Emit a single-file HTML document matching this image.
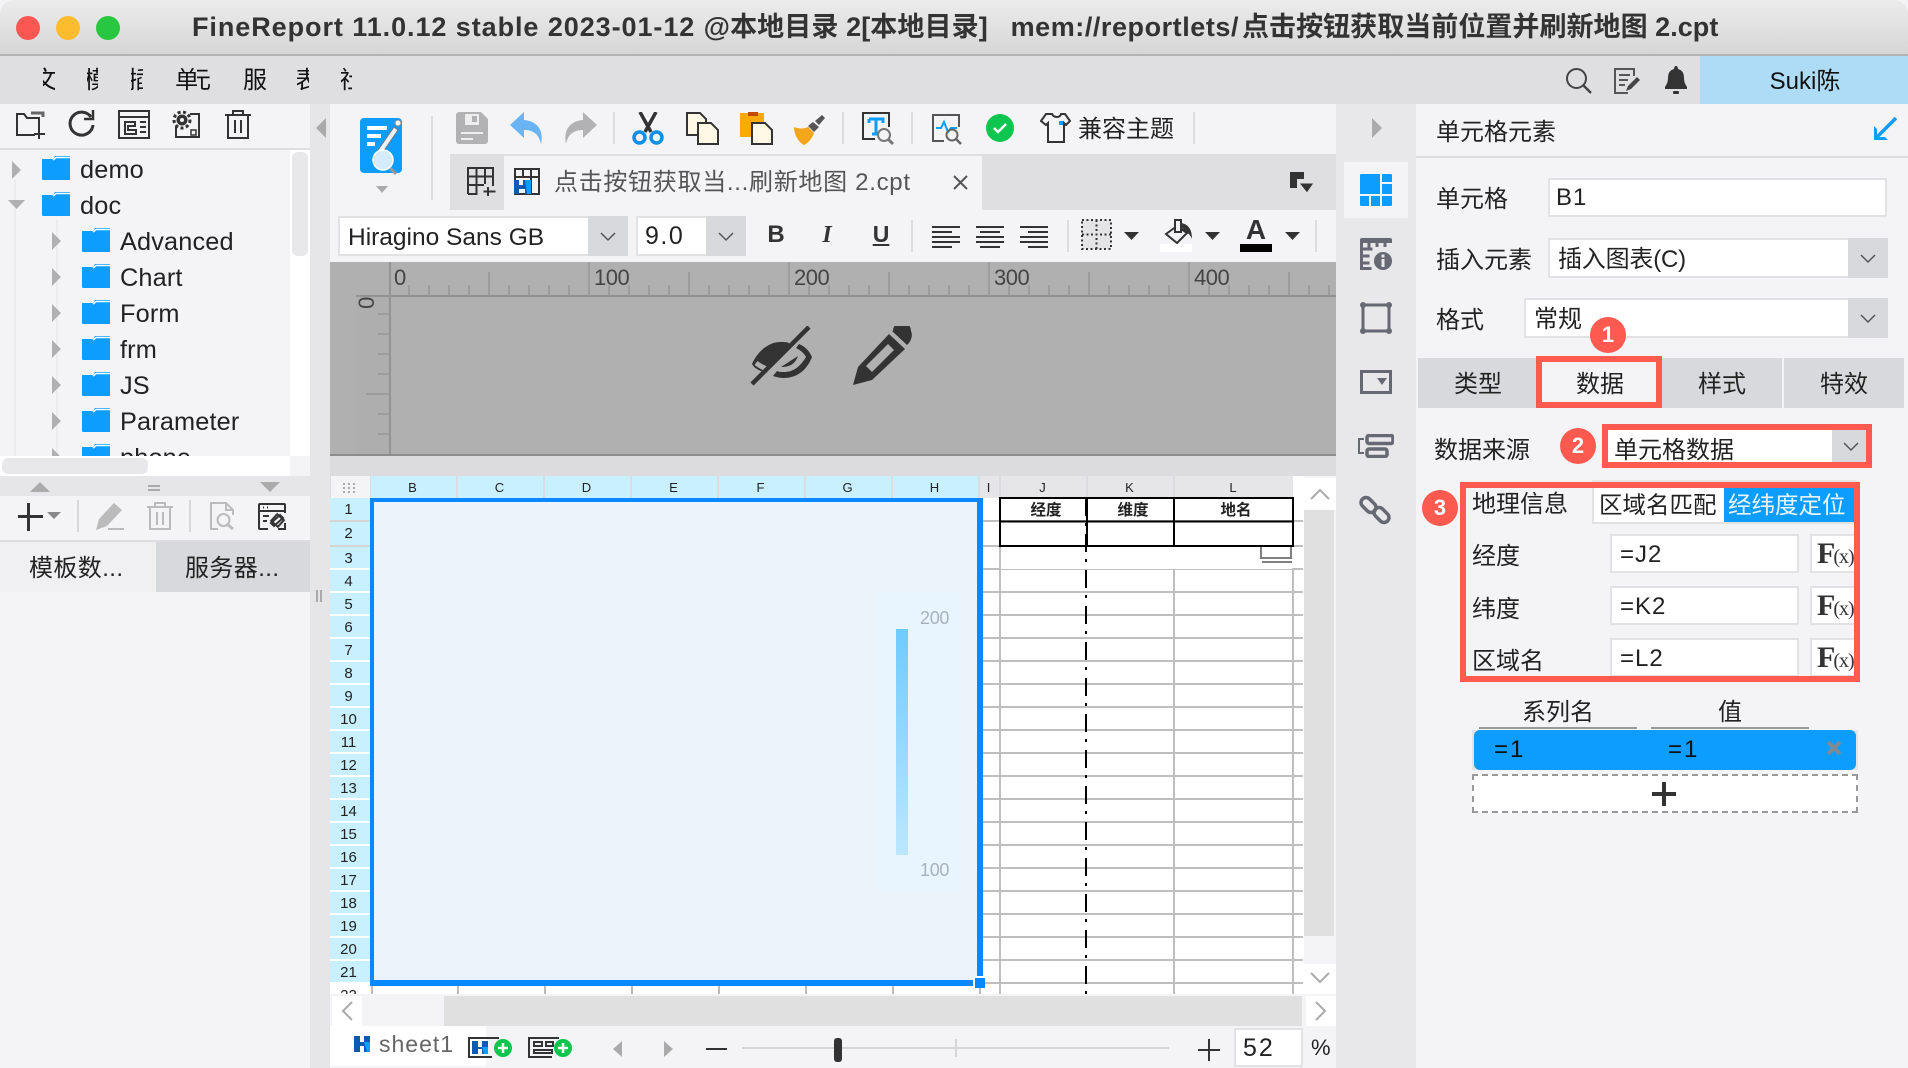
<!DOCTYPE html>
<html><head><meta charset="utf-8"><title>FineReport</title>
<style>
html,body{margin:0;padding:0;background:#fff}
#p{position:relative;width:1908px;height:1068px;overflow:hidden;background:#f4f4f6;font-family:"Liberation Sans","Noto Sans CJK SC",sans-serif;color:#222}
#p div,#p svg,#p span.a{position:absolute}
.t{white-space:nowrap;font-size:24px;line-height:30px;height:30px}
.tr{letter-spacing:.15px;font-size:25.3px !important}
.b{background:#fff;border:2px solid #e2e2e4;box-sizing:border-box}
.ar{background:#d8d9dc}
.r{border:6px solid #ff5a4f;box-sizing:border-box}
.bd{width:36px;height:36px;border-radius:50%;background:#ff5a4f;color:#fff;font-weight:bold;font-size:22px;line-height:36px;text-align:center}
.f{width:28px;height:24px}
.ch{background:#c9f0ff;height:22px;top:476px;font-size:13px;line-height:24px;text-align:center;overflow:hidden;text-indent:-2px}
.cg{background:#e6e6e8;height:22px;top:476px;font-size:13px;line-height:24px;text-align:center;overflow:hidden;text-indent:-2px}
.rh{left:330px;width:40px;height:21px;background:#c9f0ff;font-size:15px;line-height:23px;text-align:center;text-indent:-3px}
.rl{font-size:22px;line-height:26px;height:26px;color:#444;top:265px;letter-spacing:-.5px}
.m{font-size:24px;line-height:30px;height:30px;top:66px;overflow:hidden;color:#111;white-space:nowrap}
.fx{font-family:'Liberation Serif',serif;font-weight:bold;font-size:30px;color:#333;letter-spacing:-2px}
.fx span{font-size:20px;font-weight:normal;letter-spacing:-1px}
</style></head><body><div id="p">

<!-- title bar -->
<div style="left:0;top:0;width:1908px;height:54px;background:linear-gradient(#ececec,#d6d6d6);border-radius:14px 14px 0 0"></div>
<div style="left:0;top:54px;width:1908px;height:2px;background:#b4b4b4"></div>
<div style="left:16px;top:16px;width:24px;height:24px;border-radius:50%;background:#fc5753"></div>
<div style="left:56px;top:16px;width:24px;height:24px;border-radius:50%;background:#fdbc2e"></div>
<div style="left:96px;top:16px;width:24px;height:24px;border-radius:50%;background:#27c83f"></div>
<div class="t" style="left:192px;top:12px;font-size:27px;font-weight:bold;color:#333;letter-spacing:.93px">FineReport 11.0.12 stable 2023-01-12 <span style="letter-spacing:.1px">@本地目录 2[本地目录]&nbsp;&nbsp;&nbsp;</span><span style="letter-spacing:.55px">mem://reportlets/</span><span style="letter-spacing:.04px;margin-left:3px">点击按钮获取当前位置并刷新地图 2.cpt</span></div>

<!-- menu bar -->
<div style="left:0;top:56px;width:1908px;height:48px;background:#dfdfe1"></div>
<div class="m" style="left:43px;width:12px"><span style="margin-left:-10px">文</span></div>
<div class="m" style="left:87px;width:11px"><span style="margin-left:-3px">模</span></div>
<div class="m" style="left:131px;width:12px"><span style="margin-left:-3px">插</span></div>
<div class="m" style="left:175px;width:22px">单</div>
<div class="m" style="left:197px;width:14px"><span style="margin-left:-10px">元</span></div>
<div class="m" style="left:243px;width:24px">服</div>
<div class="m" style="left:297px;width:12px"><span style="margin-left:-2px">表</span></div>
<div class="m" style="left:341px;width:11px"><span style="margin-left:-2px">社</span></div>
<svg style="left:1564px;top:66px" width="30" height="30" viewBox="0 0 30 30" fill="none" stroke="#444" stroke-width="2"><circle cx="12.500" cy="12.500" r="9.500"/><path d="M19.500 19.500L27 27" stroke-width="2.500"/></svg>
<svg style="left:1612px;top:66px" width="30" height="30" viewBox="0 0 30 30" fill="none" stroke="#555" stroke-width="2"><path d="M22 10V3H3v24h13M7 9h11M7 14h9M7 19h6"/><path d="M14 25l2-5 9-9 3 3-9 9z" fill="#444" stroke="none"/></svg>
<svg style="left:1664px;top:64px" width="24" height="32" viewBox="0 0 24 32" fill="#333"><path d="M12 2c-1 0-2 1-2 3C6 6 4 9 4 14c0 5-2 7-3 9v2h22v-2c-1-2-3-4-3-9 0-5-2-8-6-9 0-2-1-3-2-3z"/><rect x="9" y="27" width="6" height="3" rx="1"/></svg>
<div style="left:1700px;top:56px;width:208px;height:48px;background:#aedcf6"></div>
<div class="t" style="left:1700px;top:67px;width:210px;text-align:center;color:#111">Suki陈</div>

<!-- left panel -->
<div style="left:0;top:148px;width:310px;height:2px;background:#dedee0"></div>
<svg style="left:15px;top:110px" width="32" height="30" viewBox="0 0 32 30" fill="none" stroke="#333" stroke-width="2"><path d="M24 21V8H12L9 4H2v21h18"/><path d="M16 3h12v4" stroke-width="3" stroke="#666"/><path d="M24 18v11M19 24h11"/></svg>
<svg style="left:68px;top:109px" width="28" height="30" viewBox="0 0 28 30" fill="none" stroke="#333" stroke-width="3"><path d="M23 8A11.500 11.500 0 1 0 25 16"/><path d="M25 1v9h-9" stroke-width="2.500"/></svg>
<svg style="left:118px;top:110px" width="32" height="29" viewBox="0 0 32 29" fill="none" stroke="#333" stroke-width="2"><rect x="1" y="1" width="30" height="27"/><path d="M1 7h30M7 12h10v4H10v4h8v4H7z"/><path d="M22 12h6M22 17h6M22 22h6"/></svg>
<svg style="left:171px;top:110px" width="32" height="30" viewBox="0 0 32 30" fill="none" stroke="#333" stroke-width="2"><path d="M5 16v11h23V4h-9"/><circle cx="11" cy="10" r="5.500" fill="#333" stroke="none"/><circle cx="11" cy="10" r="8" stroke-width="3" stroke-dasharray="3 2.500"/><circle cx="11" cy="10" r="2" fill="#f4f4f6" stroke="none"/><rect x="20" y="20" width="5" height="5" stroke-width="1.500"/></svg>
<svg style="left:224px;top:110px" width="28" height="29" viewBox="0 0 28 29" fill="none" stroke="#333" stroke-width="2"><path d="M1 5h26M9 5V1h10v4M4 5v23h20V5M11 10v13M17 10v13"/></svg>

<!-- tree -->
<div style="left:290px;top:150px;width:20px;height:306px;background:#fff"></div>
<div style="left:292px;top:152px;width:16px;height:104px;background:#e8e8ea;border-radius:6px"></div>
<div style="left:14px;top:180px;width:2px;height:276px;background:#ececee"></div>
<div style="left:56px;top:220px;width:2px;height:236px;background:#ececee"></div>

<svg width="0" height="0" style="position:absolute"><defs><g id="fd"><path d="M0 3h11l2-3h15v24H1a1 1 0 0 1-1-1z" fill="#0d9dff"/><path d="M11 4L14 1.500h14" stroke="#fff" stroke-width="1.500" fill="none"/></g><path id="ta" d="M0 0l9 9-9 9z" fill="#b0b0b2"/></defs></svg>

<svg style="left:12px;top:161px" width="10" height="18"><use href="#ta"/></svg>
<svg style="left:8px;top:200px" width="18" height="10"><path d="M0 0h17l-8.500 9z" fill="#b0b0b2"/></svg>
<svg class="f" style="left:42px;top:156px"><use href="#fd"/></svg>
<svg class="f" style="left:42px;top:192px"><use href="#fd"/></svg>
<div class="t tr" style="left:80px;top:155px">demo</div>
<div class="t tr" style="left:80px;top:191px">doc</div>

<svg style="left:52px;top:232px" width="10" height="18"><use href="#ta"/></svg>
<svg style="left:52px;top:268px" width="10" height="18"><use href="#ta"/></svg>
<svg style="left:52px;top:304px" width="10" height="18"><use href="#ta"/></svg>
<svg style="left:52px;top:340px" width="10" height="18"><use href="#ta"/></svg>
<svg style="left:52px;top:376px" width="10" height="18"><use href="#ta"/></svg>
<svg style="left:52px;top:412px" width="10" height="18"><use href="#ta"/></svg>
<svg class="f" style="left:82px;top:228px"><use href="#fd"/></svg>
<svg class="f" style="left:82px;top:264px"><use href="#fd"/></svg>
<svg class="f" style="left:82px;top:300px"><use href="#fd"/></svg>
<svg class="f" style="left:82px;top:336px"><use href="#fd"/></svg>
<svg class="f" style="left:82px;top:372px"><use href="#fd"/></svg>
<svg class="f" style="left:82px;top:408px"><use href="#fd"/></svg>
<svg class="f" style="left:82px;top:444px"><use href="#fd"/></svg>
<div class="t tr" style="left:120px;top:227px">Advanced</div>
<div class="t tr" style="left:120px;top:263px">Chart</div>
<div class="t tr" style="left:120px;top:299px">Form</div>
<div class="t tr" style="left:120px;top:335px">frm</div>
<div class="t tr" style="left:120px;top:371px">JS</div>
<div class="t tr" style="left:120px;top:407px">Parameter</div>
<div class="t tr" style="left:120px;top:443px">phone</div>
<svg style="left:52px;top:448px" width="10" height="18"><use href="#ta"/></svg>

<div style="left:0;top:456px;width:290px;height:20px;background:#fff"></div>
<div style="left:290px;top:456px;width:20px;height:20px;background:#f4f4f6"></div>
<div style="left:2px;top:458px;width:146px;height:16px;background:#e8e8ea;border-radius:6px"></div>

<div style="left:0;top:476px;width:310px;height:20px;background:#e6e6e8"></div>
<svg style="left:30px;top:482px" width="20" height="10"><path d="M10 0l10 10H0z" fill="#aaa"/></svg>
<div style="left:148px;top:485px;width:12px;height:2px;background:#aaa"></div>
<div style="left:148px;top:489px;width:12px;height:2px;background:#aaa"></div>
<svg style="left:260px;top:482px" width="20" height="10"><path d="M0 0h20L10 10z" fill="#aaa"/></svg>

<svg style="left:16px;top:498px" width="48" height="38" viewBox="0 0 48 38" fill="#333"><path d="M11 5h3v28h-3z"/><path d="M2 17h25v3H2z"/><path d="M31 14h14l-7 7z" fill="#888"/></svg>
<div style="left:77px;top:500px;width:2px;height:32px;background:#d8d8da"></div>
<svg style="left:95px;top:501px" width="30" height="30" viewBox="0 0 30 30" fill="#bbb"><path d="M1 29l3-11L19 2l8 7-15 16z"/><rect x="13" y="27" width="16" height="2"/></svg>
<svg style="left:146px;top:502px" width="28" height="28" viewBox="0 0 28 28" fill="none" stroke="#bbb" stroke-width="2"><path d="M1 5h26M9 5V1h10v4M4 5v22h20V5M11 10v13M17 10v13"/></svg>
<div style="left:189px;top:500px;width:2px;height:32px;background:#d8d8da"></div>
<svg style="left:209px;top:502px" width="28" height="28" viewBox="0 0 28 28" fill="none" stroke="#bbb" stroke-width="2"><path d="M9 27H2V1h15l7 7v5M17 1v7h7"/><circle cx="14.500" cy="18" r="6"/><path d="M19 23l5 4" stroke-width="3"/></svg>
<svg style="left:258px;top:503px" width="28" height="27" viewBox="0 0 28 27" fill="none" stroke="#333" stroke-width="2"><path d="M10 26H2a1 1 0 0 1-1-1V2a1 1 0 0 1 1-1h24a1 1 0 0 1 1 1v8M1 8h26M5 4.500h1M9 4.500h1M5 13h6M5 18h4M20 26h7v-6"/><path d="M13 20l9-8 3 3-9 8z" fill="#f4f4f6"/><rect x="15" y="13" width="9" height="9" transform="rotate(42 19.500 17.500)"/></svg>

<div style="left:0;top:540px;width:310px;height:2px;background:#dedee0"></div>
<div style="left:0;top:542px;width:156px;height:50px;background:#f0f0f2"></div>
<div style="left:156px;top:542px;width:154px;height:50px;background:#d8d9dc"></div>
<div class="t" style="left:29px;top:554px;letter-spacing:.4px">模板数...</div>
<div class="t" style="left:185px;top:554px;letter-spacing:.4px">服务器...</div>

<!-- splitter -->
<div style="left:310px;top:104px;width:20px;height:964px;background:#e6e6e8"></div>
<svg style="left:316px;top:118px" width="10" height="20"><path d="M10 0v20L0 10z" fill="#aaa"/></svg>
<div style="left:316px;top:590px;width:2px;height:12px;background:#aaa"></div>
<div style="left:320px;top:590px;width:2px;height:12px;background:#aaa"></div>

<!-- center top -->
<div style="left:330px;top:104px;width:1006px;height:158px;background:#f4f4f6"></div>
<svg style="left:358px;top:116px" width="46" height="60" viewBox="0 0 46 60"><rect x="2" y="2" width="42" height="55" rx="4" fill="#0d9dff"/><path d="M9 12h20M9 20h14M9 28h8" stroke="#fff" stroke-width="4"/><path d="M20 34L36 11l4 3-15 22z" fill="#e9f3fb" stroke="#777" stroke-width="1"/><circle cx="40" cy="7" r="3" fill="#fff" stroke="#888"/><circle cx="25" cy="44" r="10" fill="#d5ecff" stroke="#fff" stroke-width="1.500"/><path d="M32 52l6 6" stroke="#999" stroke-width="3"/></svg>
<svg style="left:376px;top:186px" width="12" height="8"><path d="M0 0h12L6 7z" fill="#aaa"/></svg>
<div style="left:431px;top:116px;width:2px;height:84px;background:#dcdcde"></div>

<svg style="left:456px;top:112px" width="32" height="32" viewBox="0 0 32 32"><path d="M3 0h22l7 7v22a3 3 0 0 1-3 3H3a3 3 0 0 1-3-3V3a3 3 0 0 1 3-3z" fill="#b2b2b4"/><rect x="9" y="2" width="14" height="11" fill="#eee"/><rect x="16" y="4" width="5" height="6" fill="#b2b2b4"/><path d="M5 21h22M5 27h12" stroke="#eee" stroke-width="2"/></svg>
<svg style="left:510px;top:112px" width="33" height="32" viewBox="0 0 33 32"><path d="M14 0L0 13l14 13v-8c9 0 15 4 17 14 3-14-4-23-17-24z" fill="#6ab4f5"/></svg>
<svg style="left:564px;top:112px" width="33" height="32" viewBox="0 0 33 32"><path d="M19 0l14 13-14 13v-8c-9 0-15 4-17 14-3-14 4-23 17-24z" fill="#b2b2b4"/></svg>
<div style="left:613px;top:112px;width:2px;height:32px;background:#dcdcde"></div>
<svg style="left:632px;top:112px" width="32" height="33" viewBox="0 0 32 33"><path d="M8 0l11 20M24 0L13 20" stroke="#333" stroke-width="3.500" fill="none"/><circle cx="7.500" cy="25.500" r="5.500" fill="none" stroke="#0d8fe8" stroke-width="3.500"/><circle cx="24.500" cy="25.500" r="5.500" fill="none" stroke="#0d8fe8" stroke-width="3.500"/></svg>
<svg style="left:686px;top:112px" width="33" height="33" viewBox="0 0 33 33" fill="#fff8e6" stroke="#333" stroke-width="2"><path d="M1 1h13l6 6v16H1z"/><path d="M12 11h13l7 7v14H12z"/></svg>
<svg style="left:740px;top:112px" width="33" height="33" viewBox="0 0 33 33"><path d="M0 1h24v24H0z" fill="#fcaa00"/><rect x="8" y="0" width="10" height="4" fill="#c04a00"/><path d="M12 11h13l7 7v14H12z" fill="#fff8e6" stroke="#333" stroke-width="2"/></svg>
<svg style="left:794px;top:114px" width="32" height="32" viewBox="0 0 32 32"><path d="M0 13c5 2 10 2 14 0l6 6c-2 6-7 11-10 12C4 28 0 20 0 13z" fill="#f3a51b"/><path d="M14 12l6 6 5-5-6-5z" fill="#555"/><path d="M21 7l7-6 3 3-6 7z" fill="#555"/></svg>
<div style="left:842px;top:112px;width:2px;height:32px;background:#dcdcde"></div>
<svg style="left:862px;top:112px" width="33" height="34" viewBox="0 0 33 34" fill="none"><path d="M13 27H1V1h26v14" stroke="#333" stroke-width="2"/><path d="M7 7h14v4M14 7v15M10 22h7M7 7v4" stroke="#0d9dff" stroke-width="3"/><circle cx="22" cy="23" r="6" stroke="#777" stroke-width="2"/><path d="M26 27l5 5" stroke="#777" stroke-width="3"/></svg>
<div style="left:911px;top:112px;width:2px;height:32px;background:#dcdcde"></div>
<svg style="left:932px;top:114px" width="31" height="32" viewBox="0 0 31 32" fill="none"><path d="M12 27H1V1h26v12" stroke="#555" stroke-width="2"/><path d="M4 14h5l3-6 4 10 3-4h6" stroke="#0d9dff" stroke-width="2"/><circle cx="20" cy="21" r="5.500" stroke="#666" stroke-width="2"/><path d="M24 25l5 5" stroke="#666" stroke-width="2.500"/></svg>
<svg style="left:986px;top:114px" width="28" height="28" viewBox="0 0 28 28"><circle cx="14" cy="14" r="14" fill="#0cc64f"/><path d="M8 14l4 4 8-8" stroke="#fff" stroke-width="2.500" fill="none"/></svg>
<svg style="left:1040px;top:113px" width="31" height="30" viewBox="0 0 31 30" fill="none" stroke="#333" stroke-width="2"><path d="M10 1H6L1 8l5 4 2-2v19h16V10l2 2 4-4-5-7h-4c-1 4-7 4-9 0z"/><rect x="19" y="8" width="4" height="4" fill="#0d9dff" stroke="none"/></svg>
<div class="t" style="left:1078px;top:115px">兼容主题</div>
<div style="left:1193px;top:112px;width:2px;height:32px;background:#dcdcde"></div>

<!-- tab row -->
<div style="left:450px;top:154px;width:886px;height:56px;background:#dfdfe1"></div>
<div style="left:504px;top:156px;width:478px;height:54px;background:#f4f4f6"></div>
<svg style="left:467px;top:167px" width="30" height="30" viewBox="0 0 30 30" fill="none" stroke="#333" stroke-width="2"><path d="M1 27V1h25v18M1 9.500h25M1 18h16M9.500 1v26H1M18 1v16M21 20v9M16.500 24.500h12"/></svg>
<svg style="left:514px;top:168px" width="26" height="27" viewBox="0 0 26 27" fill="none"><path d="M1 26V1h24v25H1zM1 9h24M9 1v8M17 1v25M9 17h8" stroke="#333" stroke-width="2"/><path d="M0 12h5v5h4v-5h6v14h-4v-5H5v5H0z" fill="#0d5ab0"/><path d="M11 12h6v14h-4z" fill="#0d9dff"/></svg>
<div class="t" style="left:554px;top:168px;color:#555;letter-spacing:.7px">点击按钮获取当...刷新地图 2.cpt</div>
<svg style="left:953px;top:175px" width="15" height="15"><path d="M1 1l13 13M14 1L1 14" stroke="#555" stroke-width="2"/></svg>
<svg style="left:1290px;top:172px" width="25" height="22" viewBox="0 0 25 22"><path d="M0 0h14v7H7v9H0z" fill="#333"/><path d="M9 11h15l-7 10z" fill="#333" stroke="#dfdfe1"/></svg>

<!-- format bar -->
<div class="b" style="left:338px;top:216px;width:252px;height:40px"></div>
<div class="ar" style="left:588px;top:216px;width:40px;height:40px"></div>
<svg style="left:600px;top:232px" width="16" height="10"><path d="M1 1l7 7 7-7" stroke="#555" stroke-width="1.500" fill="none"/></svg>
<div class="t" style="left:348px;top:223px;font-size:24.500px">Hiragino Sans GB</div>
<div class="b" style="left:636px;top:216px;width:72px;height:40px"></div>
<div class="ar" style="left:706px;top:216px;width:40px;height:40px"></div>
<svg style="left:718px;top:232px" width="16" height="10"><path d="M1 1l7 7 7-7" stroke="#555" stroke-width="1.500" fill="none"/></svg>
<div class="t" style="left:645px;top:221px;font-size:25px;letter-spacing:1.500px">9.0</div>
<div class="t" style="left:766px;top:220px;width:20px;text-align:center;font-weight:bold;font-size:24px;color:#333">B</div>
<div class="t" style="left:817px;top:220px;width:20px;text-align:center;font-style:italic;font-weight:bold;font-size:24px;font-family:'Liberation Serif',serif;color:#333">I</div>
<div class="t" style="left:871px;top:219px;width:20px;text-align:center;font-weight:bold;font-size:23px;color:#333;text-decoration:underline">U</div>
<div style="left:911px;top:220px;width:2px;height:32px;background:#dcdcde"></div>
<svg style="left:932px;top:226px" width="116" height="23" viewBox="0 0 116 23" stroke="#333" stroke-width="2"><path d="M0 1h28M0 6h20M0 11h28M0 16h28M0 21h20"/><path d="M44 1h28M48 6h20M44 11h28M44 16h28M48 21h20"/><path d="M88 1h28M96 6h20M88 11h28M88 16h28M96 21h20"/></svg>
<div style="left:1067px;top:220px;width:2px;height:32px;background:#dcdcde"></div>
<svg style="left:1081px;top:219px" width="31" height="31" viewBox="0 0 31 31"><rect x="1" y="1" width="29" height="29" fill="#e4e4e6"/><path d="M1 1h29v29H1zM1 15.500h29M15.500 1v29" fill="none" stroke="#333" stroke-width="2" stroke-dasharray="2 2.500"/></svg>
<svg style="left:1124px;top:232px" width="16" height="8"><path d="M0 0h15l-7.500 8z" fill="#333"/></svg>
<svg style="left:1164px;top:219px" width="30" height="26" viewBox="0 0 30 26" fill="none"><path d="M13 7L2 15l11 9 10-10z" stroke="#333" stroke-width="2"/><path d="M11 1h6v12h-6z" stroke="#333" stroke-width="2" fill="#f4f4f6"/><path d="M17 4c7 1 11 6 11 16-2-5-5-7-9-8z" fill="#333"/></svg>
<div style="left:1160px;top:244px;width:32px;height:8px;background:#fff"></div>
<svg style="left:1205px;top:232px" width="16" height="8"><path d="M0 0h15l-7.500 8z" fill="#333"/></svg>
<div class="t" style="left:1241px;top:215px;width:30px;text-align:center;font-weight:bold;font-size:28px;color:#333">A</div>
<div style="left:1240px;top:244px;width:32px;height:8px;background:#000"></div>
<svg style="left:1285px;top:232px" width="16" height="8"><path d="M0 0h15l-7.500 8z" fill="#333"/></svg>
<div style="left:1315px;top:220px;width:2px;height:32px;background:#dcdcde"></div>

<!-- ruler area -->
<div style="left:330px;top:262px;width:1006px;height:194px;background:#b0b0b0"></div>
<div style="left:356px;top:296px;width:33px;height:159px;background:#aeaeae"></div>
<div style="left:356px;top:295px;width:980px;height:2px;background:#939393"></div>
<div style="left:389px;top:262px;width:2px;height:193px;background:#939393"></div>
<div style="left:330px;top:454px;width:1006px;height:2px;background:#8c8c8c"></div>
<svg style="left:389px;top:262px" width="947" height="34" stroke="#969696" stroke-width="1.500"><path d="M20 23v10M40 23v10M60 23v10M80 23v10M100 10v23M120 23v10M140 23v10M160 23v10M180 23v10M200 0v33M220 23v10M240 23v10M260 23v10M280 23v10M300 10v23M320 23v10M340 23v10M360 23v10M380 23v10M400 0v33M420 23v10M440 23v10M460 23v10M480 23v10M500 10v23M520 23v10M540 23v10M560 23v10M580 23v10M600 0v33M620 23v10M640 23v10M660 23v10M680 23v10M700 10v23M720 23v10M740 23v10M760 23v10M780 23v10M800 0v33M820 23v10M840 23v10M860 23v10M880 23v10M900 10v23M920 23v10M940 23v10"/></svg>
<svg style="left:356px;top:296px" width="34" height="160" stroke="#969696" stroke-width="1.500"><path d="M22 18h11M22 38h11M22 58h11M22 78h11M10 98h23M22 118h11M22 138h11"/></svg>
<div class="rl" style="left:394px">0</div>
<div class="rl" style="left:594px">100</div>
<div class="rl" style="left:794px">200</div>
<div class="rl" style="left:994px">300</div>
<div class="rl" style="left:1194px">400</div>
<div class="rl" style="left:354px;top:290px;width:26px;text-align:center;transform:rotate(-90deg)">0</div>

<svg style="left:750px;top:326px" width="64" height="60" viewBox="0 0 64 60"><path d="M2 38c6-14 18-22 28-22s8 1 10 2L14 46C8 44 4 42 2 38z" fill="#333"/><path d="M6 37c4 3 8 5 11 6" stroke="#b0b0b0" stroke-width="5" fill="none"/><path d="M62 31c-3-7-8-11-13-13l-3 4c4 2 8 5 10 9-6 10-13 15-22 15-3 0-5 0-7-1l-4 5c3 1 7 2 11 2 13 0 23-8 28-21z" fill="#333"/><path d="M48 30c-3 8-8 11-17 11z" fill="#333"/><path d="M59 1L2 58" stroke="#333" stroke-width="4.500"/></svg>
<svg style="left:853px;top:326px" width="60" height="60" viewBox="0 0 60 60"><path d="M0 59l5-18L36 8l16 15-33 31z" fill="#333"/><path d="M40 5a7 7 0 0 1 18 0c2 5 0 9-2 12L54 19 39 5z" fill="#333"/><path d="M13 40L35 18l6 6-22 22z" fill="#b0b0b0"/></svg>

<div style="left:330px;top:456px;width:1006px;height:20px;background:#dcdcde"></div>

<!-- sheet -->
<div style="left:330px;top:476px;width:974px;height:518px;background:#fff"></div>
<div style="left:330px;top:476px;width:974px;height:22px;background:#dcdce0"></div>
<div style="left:331px;top:476px;width:39px;height:22px;background:#f4f4f6"></div>
<svg style="left:342px;top:482px" width="16" height="12" fill="#aaa"><rect x="1" y="1" width="2" height="2"/><rect x="6" y="1" width="2" height="2"/><rect x="11" y="1" width="2" height="2"/><rect x="1" y="5" width="2" height="2"/><rect x="6" y="5" width="2" height="2"/><rect x="11" y="5" width="2" height="2"/><rect x="1" y="9" width="2" height="2"/><rect x="6" y="9" width="2" height="2"/><rect x="11" y="9" width="2" height="2"/></svg>
<div class="ch" style="left:371px;width:85px">B</div>
<div class="ch" style="left:458px;width:85px">C</div>
<div class="ch" style="left:545px;width:85px">D</div>
<div class="ch" style="left:632px;width:85px">E</div>
<div class="ch" style="left:719px;width:85px">F</div>
<div class="ch" style="left:806px;width:85px">G</div>
<div class="ch" style="left:893px;width:85px">H</div>
<div class="cg" style="left:980px;width:19px">I</div>
<div class="cg" style="left:1001px;width:85px">J</div>
<div class="cg" style="left:1088px;width:85px">K</div>
<div class="cg" style="left:1175px;width:118px">L</div>
<div style="left:1293px;top:476px;width:11px;height:22px;background:#fff"></div>

<div class="rh" style="top:498px;height:22px">1</div>
<div class="rh" style="top:522px;height:23px">2</div>
<div class="rh" style="top:547px">3</div>
<div class="rh" style="top:570px">4</div>
<div class="rh" style="top:593px">5</div>
<div class="rh" style="top:616px">6</div>
<div class="rh" style="top:639px">7</div>
<div class="rh" style="top:662px">8</div>
<div class="rh" style="top:685px">9</div>
<div class="rh" style="top:708px">10</div>
<div class="rh" style="top:731px">11</div>
<div class="rh" style="top:754px">12</div>
<div class="rh" style="top:777px">13</div>
<div class="rh" style="top:800px">14</div>
<div class="rh" style="top:823px">15</div>
<div class="rh" style="top:846px">16</div>
<div class="rh" style="top:869px">17</div>
<div class="rh" style="top:892px">18</div>
<div class="rh" style="top:915px">19</div>
<div class="rh" style="top:938px">20</div>
<div class="rh" style="top:961px">21</div>
<div style="left:330px;top:520px;width:40px;height:2px;background:#d4d4d6"></div>
<div style="left:330px;top:545px;width:40px;height:2px;background:#d4d4d6"></div>
<div style="left:330px;top:984px;width:40px;height:10px;overflow:hidden;font-size:15px;line-height:23px;text-align:center;text-indent:-3px">22</div>

<!-- grid right -->
<div style="left:983px;top:545px;width:320px;height:449px;background:repeating-linear-gradient(to bottom,#bfbfbf 0,#bfbfbf 2px,transparent 2px,transparent 23px)"></div>
<div style="left:999px;top:498px;width:2px;height:496px;background:#bfbfbf"></div>
<div style="left:1173px;top:570px;width:2px;height:424px;background:#bfbfbf"></div>
<div style="left:1292px;top:570px;width:2px;height:424px;background:#bfbfbf"></div>
<div style="left:371px;top:985px;width:2px;height:9px;background:#bbb"></div>
<div style="left:457px;top:985px;width:2px;height:9px;background:#bbb"></div>
<div style="left:544px;top:985px;width:2px;height:9px;background:#bbb"></div>
<div style="left:631px;top:985px;width:2px;height:9px;background:#bbb"></div>
<div style="left:718px;top:985px;width:2px;height:9px;background:#bbb"></div>
<div style="left:805px;top:985px;width:2px;height:9px;background:#bbb"></div>
<div style="left:892px;top:985px;width:2px;height:9px;background:#bbb"></div>
<div style="left:979px;top:985px;width:2px;height:9px;background:#bbb"></div>
<div style="left:983px;top:498px;width:320px;height:2px;background:#fff"></div>
<div style="left:983px;top:520px;width:320px;height:2px;background:#bfbfbf"></div>
<div style="left:1001px;top:547px;width:291px;height:22px;background:#fff"></div>
<div style="left:1260px;top:546px;width:32px;height:13px;border:solid #808080;border-width:0 2px 2px 2px;box-sizing:border-box"></div>
<div style="left:1262px;top:561px;width:30px;height:2px;background:#808080"></div>

<svg style="left:999px;top:497px" width="296" height="50" fill="none" stroke="#000" stroke-width="2"><path d="M1 1h293v48H1zM1 24.500h293M88 1v48M175 1v48M294 1v48"/></svg>
<div class="t" style="left:1016px;top:496px;width:60px;text-align:center;font-size:15.500px;font-weight:bold">经度</div>
<div class="t" style="left:1103px;top:496px;width:60px;text-align:center;font-size:15.500px;font-weight:bold">维度</div>
<div class="t" style="left:1206px;top:496px;width:60px;text-align:center;font-size:15.500px;font-weight:bold">地名</div>
<svg style="left:1084px;top:498px" width="4" height="496"><path d="M2 0v496" stroke="#000" stroke-width="2" stroke-dasharray="18 7 3 8"/></svg>

<!-- selection -->
<div style="left:370px;top:498px;width:613px;height:488px;box-sizing:border-box;background:#ebf3fb;border:solid #0a88ff;border-width:4px 6px 6px 4px"></div>
<div style="left:878px;top:592px;width:82px;height:300px;background:#e9f5fe;border-radius:5px"></div>
<div style="left:896px;top:629px;width:12px;height:226px;background:linear-gradient(#6fcbff,#bce6ff)"></div>
<div class="t" style="left:920px;top:603px;font-size:18px;color:#a9b2bb;letter-spacing:-.3px">200</div>
<div class="t" style="left:920px;top:855px;font-size:18px;color:#a9b2bb;letter-spacing:-.3px">100</div>
<div style="left:973px;top:976px;width:12px;height:12px;background:#fff"></div>
<div style="left:975px;top:978px;width:10px;height:10px;background:#0a88ff"></div>

<!-- scrollbars -->
<div style="left:1304px;top:476px;width:32px;height:520px;background:#f4f4f6"></div>
<div style="left:1304px;top:478px;width:32px;height:32px;background:#fff"></div>
<svg style="left:1310px;top:488px" width="20" height="12"><path d="M1 11l9-9 9 9" stroke="#aaa" stroke-width="2" fill="none"/></svg>
<div style="left:1304px;top:510px;width:30px;height:426px;background:#e0e0e0"></div>
<div style="left:1304px;top:964px;width:32px;height:30px;background:#fff"></div>
<svg style="left:1310px;top:972px" width="20" height="12"><path d="M1 1l9 9 9-9" stroke="#aaa" stroke-width="2" fill="none"/></svg>

<div style="left:330px;top:994px;width:1006px;height:74px;background:#f4f4f6"></div>
<div style="left:332px;top:996px;width:30px;height:30px;background:#fff"></div>
<svg style="left:341px;top:1001px" width="12" height="20"><path d="M11 1L2 10l9 9" stroke="#aaa" stroke-width="2" fill="none"/></svg>
<div style="left:444px;top:996px;width:858px;height:30px;background:#e0e0e0"></div>
<div style="left:1306px;top:996px;width:30px;height:30px;background:#fff"></div>
<svg style="left:1315px;top:1001px" width="12" height="20"><path d="M1 1l9 9-9 9" stroke="#aaa" stroke-width="2" fill="none"/></svg>

<!-- sheet bar -->
<div style="left:330px;top:1026px;width:156px;height:40px;background:#fff"></div>
<svg style="left:354px;top:1036px" width="16" height="16"><path d="M0 0h6v6h4V0h6v16h-6v-6H6v6H0z" fill="#0d5ab0"/><path d="M10 6h6v10h-3z" fill="#0d9dff"/></svg>
<div class="t" style="left:379px;top:1029px;font-size:23px;color:#666;letter-spacing:1px">sheet1</div>
<svg style="left:468px;top:1035px" width="46" height="24" viewBox="0 0 46 24"><path d="M24 22H1V3h30" fill="none" stroke="#333" stroke-width="2"/><path d="M4 6h6v6h4V6h6v13h-6v-5h-4v5H4z" fill="#0d5ab0"/><path d="M14 12h6v7h-4z" fill="#0d9dff"/><circle cx="35" cy="13" r="9" fill="#0cc64f"/><path d="M30 13h10M35 8v10" stroke="#fff" stroke-width="2.500"/></svg>
<svg style="left:528px;top:1035px" width="46" height="24" viewBox="0 0 46 24" fill="none"><path d="M24 22H1V3h30" stroke="#333" stroke-width="2"/><path d="M6 7h8v4H6zM18 7h7v4h-7zM6 15h18v3H6z" stroke="#333" stroke-width="2"/><circle cx="35" cy="13" r="9" fill="#0cc64f"/><path d="M30 13h10M35 8v10" stroke="#fff" stroke-width="2.500"/></svg>
<svg style="left:613px;top:1041px" width="10" height="16"><path d="M9 0v16L0 8z" fill="#aaa"/></svg>
<svg style="left:664px;top:1041px" width="10" height="16"><path d="M0 0v16l9-8z" fill="#aaa"/></svg>
<div style="left:706px;top:1048px;width:21px;height:2px;background:#333"></div>
<div style="left:742px;top:1047px;width:427px;height:2px;background:#d5d5d7"></div>
<div style="left:955px;top:1039px;width:2px;height:18px;background:#d5d5d7"></div>
<div style="left:834px;top:1038px;width:8px;height:24px;background:#333;border-radius:3px"></div>
<svg style="left:1198px;top:1039px" width="22" height="22"><path d="M0 11h22M11 0v22" stroke="#333" stroke-width="2"/></svg>
<div class="b" style="left:1234px;top:1028px;width:69px;height:39px"></div>
<div class="t" style="left:1243px;top:1033px;font-size:25px;letter-spacing:2px">52</div>
<div class="t" style="left:1311px;top:1033px;font-size:22px">%</div>

<!-- right sidebar -->
<div style="left:1336px;top:104px;width:80px;height:964px;background:#e8e8ea"></div>
<svg style="left:1372px;top:118px" width="10" height="20"><path d="M0 0v20l10-10z" fill="#aaa"/></svg>
<div style="left:1344px;top:162px;width:64px;height:56px;background:#f4f4f6"></div>
<svg style="left:1360px;top:174px" width="32" height="32" viewBox="0 0 32 32" fill="#0d9dff"><path d="M1 0h19v20H0V1a1 1 0 0 1 1-1z"/><path d="M22 0h9a1 1 0 0 1 1 1v7H22zM22 10h10v10H22zM0 22h9v10H1a1 1 0 0 1-1-1zM11 22h9v10h-9zM22 22h10v9a1 1 0 0 1-1 1h-9z"/></svg>
<svg style="left:1360px;top:238px" width="32" height="32" viewBox="0 0 32 32"><path d="M2 0h28a2 2 0 0 1 2 2v3H0V2a2 2 0 0 1 2-2z" fill="#666873"/><path d="M1.500 4v26.500h10M1.500 11h11M1.500 18h8M1.500 25h8M9 4v7M17 4v5M25 4v5" fill="none" stroke="#666873" stroke-width="3"/><circle cx="23" cy="23" r="9" fill="#666873"/><rect x="21.500" y="21" width="3" height="8" fill="#e8e8ea"/><rect x="21.500" y="16.500" width="3" height="3" fill="#e8e8ea"/></svg>
<svg style="left:1360px;top:302px" width="32" height="32" viewBox="0 0 32 32" fill="#666873"><rect x="3" y="3" width="26" height="26" fill="none" stroke="#666873" stroke-width="3"/><circle cx="3" cy="3" r="3"/><circle cx="29" cy="3" r="3"/><circle cx="3" cy="29" r="3"/><circle cx="29" cy="29" r="3"/></svg>
<svg style="left:1360px;top:370px" width="32" height="24" viewBox="0 0 32 24"><rect x="1.500" y="1.500" width="29" height="21" fill="none" stroke="#666873" stroke-width="3"/><path d="M17 8h10l-5 7z" fill="#666873"/></svg>
<svg style="left:1358px;top:434px" width="36" height="24" viewBox="0 0 36 24" fill="none" stroke="#666873"><rect x="9" y="1.500" width="26" height="8" rx="2" stroke-width="3.500"/><rect x="9" y="15" width="20" height="7.500" rx="2" stroke-width="3.500"/><path d="M6 5H1v14h5" stroke-width="2"/></svg>
<svg style="left:1359px;top:494px" width="32" height="32" viewBox="0 0 32 32" fill="none" stroke="#666873" stroke-width="3.500"><rect x="1" y="6" width="17" height="10" rx="5" transform="rotate(45 9.500 11)"/><rect x="14" y="16" width="17" height="10" rx="5" transform="rotate(45 22.500 21)"/></svg>

<!-- right panel -->
<div style="left:1416px;top:104px;width:492px;height:964px;background:#f4f4f6"></div>
<div class="t" style="left:1436px;top:118px">单元格元素</div>
<svg style="left:1873px;top:117px" width="24" height="24" viewBox="0 0 24 24"><path d="M23 1L4 20" stroke="#0d9dff" stroke-width="3.500"/><path d="M1 9v14h14l-3-3H4v-8z" fill="#0d9dff"/></svg>
<div style="left:1416px;top:156px;width:492px;height:2px;background:#dcdcde"></div>

<div class="t" style="left:1436px;top:185px">单元格</div>
<div class="b" style="left:1548px;top:178px;width:339px;height:39px"></div>
<div class="t" style="left:1556px;top:183px;font-size:24px;letter-spacing:1px">B1</div>

<div class="t" style="left:1436px;top:246px">插入元素</div>
<div class="b" style="left:1548px;top:238px;width:302px;height:40px"></div>
<div class="ar" style="left:1848px;top:238px;width:40px;height:40px"></div>
<svg style="left:1860px;top:254px" width="16" height="10"><path d="M1 1l7 7 7-7" stroke="#555" stroke-width="1.500" fill="none"/></svg>
<div class="t" style="left:1558px;top:245px;letter-spacing:-.2px">插入图表(C)</div>

<div class="t" style="left:1436px;top:306px">格式</div>
<div class="b" style="left:1524px;top:298px;width:326px;height:40px"></div>
<div class="ar" style="left:1848px;top:298px;width:40px;height:40px"></div>
<svg style="left:1860px;top:314px" width="16" height="10"><path d="M1 1l7 7 7-7" stroke="#555" stroke-width="1.500" fill="none"/></svg>
<div class="t" style="left:1534px;top:305px">常规</div>

<div class="ar" style="left:1418px;top:358px;width:118px;height:50px"></div>
<div class="ar" style="left:1662px;top:358px;width:120px;height:50px"></div>
<div class="ar" style="left:1784px;top:358px;width:120px;height:50px"></div>
<div style="left:1536px;top:356px;width:126px;height:52px;background:#f4f4f6"></div>
<div class="r" style="left:1536px;top:356px;width:126px;height:52px"></div>
<div class="t" style="left:1418px;top:370px;width:120px;text-align:center">类型</div>
<div class="t" style="left:1540px;top:370px;width:120px;text-align:center">数据</div>
<div class="t" style="left:1662px;top:370px;width:120px;text-align:center">样式</div>
<div class="t" style="left:1784px;top:370px;width:120px;text-align:center">特效</div>
<div class="bd" style="left:1590px;top:317px">1</div>

<div class="t" style="left:1434px;top:436px">数据来源</div>
<div class="bd" style="left:1560px;top:428px">2</div>
<div style="left:1602px;top:424px;width:270px;height:44px;background:#fff"></div>
<div class="ar" style="left:1832px;top:430px;width:34px;height:32px"></div>
<svg style="left:1843px;top:442px" width="16" height="10"><path d="M1 1l7 7 7-7" stroke="#555" stroke-width="1.500" fill="none"/></svg>
<div class="r" style="left:1602px;top:424px;width:270px;height:44px"></div>
<div class="t" style="left:1614px;top:436px">单元格数据</div>

<div class="bd" style="left:1422px;top:490px">3</div>
<div class="t" style="left:1472px;top:490px">地理信息</div>
<div style="left:1592px;top:480px;width:264px;height:44px;background:#fff;border:2px solid #e2e2e4;box-sizing:border-box"></div>
<div style="left:1724px;top:488px;width:130px;height:34px;background:#0d9dff"></div>
<div class="t" style="left:1599px;top:490px;font-size:23.500px">区域名匹配</div>
<div class="t" style="left:1728px;top:490px;color:#e8f5ff;font-size:23.500px">经纬度定位</div>

<div class="t" style="left:1472px;top:542px">经度</div>
<div class="b" style="left:1610px;top:534px;width:189px;height:39px"></div>
<div class="t" style="left:1620px;top:540px;letter-spacing:1px">=J2</div>
<div class="b" style="left:1810px;top:534px;width:50px;height:39px"></div>
<div class="t fx" style="left:1817px;top:539px">F<span>(x)</span></div>

<div class="t" style="left:1472px;top:595px">纬度</div>
<div class="b" style="left:1610px;top:586px;width:189px;height:39px"></div>
<div class="t" style="left:1620px;top:592px;letter-spacing:1px">=K2</div>
<div class="b" style="left:1810px;top:586px;width:50px;height:39px"></div>
<div class="t fx" style="left:1817px;top:591px">F<span>(x)</span></div>

<div class="t" style="left:1472px;top:647px">区域名</div>
<div class="b" style="left:1610px;top:638px;width:189px;height:39px"></div>
<div class="t" style="left:1620px;top:644px;letter-spacing:1px">=L2</div>
<div class="b" style="left:1810px;top:638px;width:50px;height:39px"></div>
<div class="t fx" style="left:1817px;top:643px">F<span>(x)</span></div>
<div class="r" style="left:1460px;top:482px;width:400px;height:200px"></div>

<div class="t" style="left:1498px;top:698px;width:120px;text-align:center">系列名</div>
<div class="t" style="left:1670px;top:698px;width:120px;text-align:center">值</div>
<div style="left:1479px;top:727px;width:158px;height:2px;background:#999"></div>
<div style="left:1651px;top:727px;width:158px;height:2px;background:#999"></div>
<div style="left:1472px;top:730px;width:386px;height:40px;background:#e4e4e6"></div>
<div style="left:1474px;top:730px;width:382px;height:40px;background:#0d9dff;border-radius:6px"></div>
<div class="t" style="left:1494px;top:735px;color:#111;letter-spacing:2px">=1</div>
<div class="t" style="left:1668px;top:735px;color:#111;letter-spacing:2px">=1</div>
<svg style="left:1827px;top:741px" width="14" height="14"><path d="M1 1l12 12M13 1L1 13" stroke="#7f8a93" stroke-width="4"/></svg>
<div style="left:1472px;top:774px;width:386px;height:39px;background:#fff;border:2px dashed #999;box-sizing:border-box"></div>
<svg style="left:1652px;top:782px" width="24" height="24"><path d="M0 12h24M12 0v24" stroke="#333" stroke-width="4"/></svg>

</div></body></html>
